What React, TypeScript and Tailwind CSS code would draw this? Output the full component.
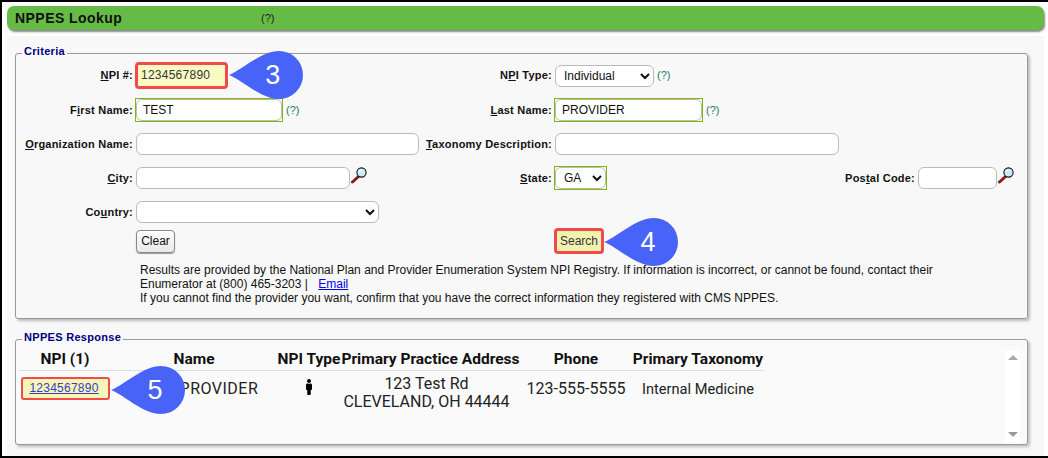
import { FaMale } from 'react-icons/fa';

const inputCls = 'h-[22px] rounded-[6px] border border-[#bbb] bg-white px-[6px] text-[12px] text-[#111] outline-none';
const labelCls = 'pr-[3px] text-right text-[11px] font-bold tracking-[0.22px] text-[#111] whitespace-nowrap';
const legendCls = 'ml-[6px] -translate-y-[2px] px-[2px] text-[11px] leading-[14px] font-bold tracking-[0.3px] text-[#00007f]';
const fieldsetCls = 'rounded-[3px] border border-[#999] shadow-[2px_2px_3px_#bbb]';
const helpCls = 'text-[11px] text-[#2a7a6a] ml-[3px]';

function Magnifier() {
  return (
    <svg width="16" height="17" viewBox="0 0 16 17" className="ml-px -mt-[5px] shrink-0">
      <path d="M1.5 15L7 10" stroke="#8e1a10" strokeWidth="3" strokeLinecap="round" />
      <circle cx="10.5" cy="5.5" r="4.6" fill="#cdeaf8" stroke="#111" strokeWidth="1.1" />
      <path d="M8 5c.6-1.3 1.8-2 3.2-1.8" stroke="#fff" strokeWidth="1.2" fill="none" />
    </svg>
  );
}

function Callout({ n, className }: { n: string; className: string }) {
  return (
    <div className={`absolute h-[50px] w-[76px] ${className}`}>
      <svg width="76" height="50" viewBox="0 0 76 50" className="absolute inset-0">
        <path d="M1 25C14 20 33 1 51 1A24 24 0 1 1 51 49C33 49 14 30 1 25Z" fill="#4763f8" />
      </svg>
      <span className="absolute left-[25px] top-0 w-[40px] text-center text-[27px] leading-[50px] text-white">{n}</span>
    </div>
  );
}

function GreenBox({ children, className = '' }: { children: React.ReactNode; className?: string }) {
  return <div className={`inline-flex border border-[#7fb800] ${className}`}>{children}</div>;
}

export default function App() {
  return (
    <div className="flex h-[458px] flex-col border-y-2 border-l-2 border-black bg-white pt-[4px] pl-[5px] pr-[4px] font-['Liberation_Sans',Arial,sans-serif]">
      <div className="flex h-[24px] shrink-0 items-center rounded-[7px] bg-[#66bb46] pl-[8px] shadow-[1px_2px_2px_#888]">
        <h1 className="w-[246px] text-[14px] font-bold tracking-[0.45px] text-[#111]">NPPES Lookup</h1>
        <span className="text-[11px] text-[#222]">(?)</span>
      </div>

      <div className="mt-[6px] flex flex-1 flex-col bg-[#f8f8f8] pt-[10px] pl-[8px] pr-[16px]">
        <fieldset className={fieldsetCls + ' pb-[13px]'}>
          <legend className={legendCls}>Criteria</legend>
          <div className="-mt-[2px] grid grid-cols-[120px_287px_132px_290px_73px_1fr] grid-rows-[35px_34px_34px_34px_34px_24px] items-center">
            <label className={labelCls}><u>N</u>PI #:</label>
            <div className="relative h-[27px] w-[93px] -ml-px rounded-[4px] border-[3px] border-[#f24a4a] bg-[#fafac4] pl-[3px] text-[12px] leading-[21px] tracking-[0.25px] text-[#333]">
              1234567890
              <Callout n="3" className="left-[calc(100%+3px)] -top-[15px]" />
            </div>
            <label className={labelCls}>N<u>P</u>I Type:</label>
            <div className="col-span-3 flex items-center">
              <select defaultValue="Individual" className={inputCls + ' w-[99px] pl-[4px]'}>
                <option>Individual</option>
              </select>
              <span className={helpCls}>(?)</span>
            </div>

            <label className={labelCls}>F<u>i</u>rst Name:</label>
            <div className="-ml-px flex items-center">
              <GreenBox>
                <input readOnly value="TEST" className={inputCls + ' w-[146px]'} />
              </GreenBox>
              <span className={helpCls}>(?)</span>
            </div>
            <label className={labelCls}><u>L</u>ast Name:</label>
            <div className="col-span-3 -ml-px flex items-center">
              <GreenBox>
                <input readOnly value="PROVIDER" className={inputCls + ' w-[147px]'} />
              </GreenBox>
              <span className={helpCls}>(?)</span>
            </div>

            <label className={labelCls}><u>O</u>rganization Name:</label>
            <input readOnly className={inputCls + ' w-[283px]'} />
            <label className={labelCls}><u>T</u>axonomy Description:</label>
            <input readOnly className={inputCls + ' col-span-3 w-[284px]'} />

            <label className={labelCls}><u>C</u>ity:</label>
            <div className="flex items-center">
              <input readOnly className={inputCls + ' w-[214px]'} />
              <Magnifier />
            </div>
            <label className={labelCls}><u>S</u>tate:</label>
            <GreenBox className="-ml-px justify-self-start">
              <select defaultValue="GA" className={inputCls + ' w-[51px] pl-[4px]'}>
                <option>GA</option>
              </select>
            </GreenBox>
            <label className={labelCls}>Pos<u>t</u>al Code:</label>
            <div className="flex items-center">
              <input readOnly className={inputCls + ' w-[79px]'} />
              <Magnifier />
            </div>

            <label className={labelCls}>Co<u>u</u>ntry:</label>
            <select className={inputCls + ' col-span-5 w-[243px]'}>
              <option></option>
            </select>

            <div />
            <button className="h-[23px] w-[39px] rounded-[4px] border border-[#888] bg-[linear-gradient(#fff,#e8e8e8)] text-[12px] text-[#111] shadow-[0_1px_1px_#999]">
              Clear
            </button>
            <div />
            <button className="relative col-span-3 h-[26px] w-[50px] -ml-px rounded-[4px] border-[3px] border-[#f24a4a] bg-[#f2f2b0] text-[12px] text-[#333]">
              Search
              <Callout n="4" className="left-[calc(100%+2px)] -top-[14px]" />
            </button>
          </div>
          <p className="mt-[10px] ml-[124px] text-[12px] leading-[14px] whitespace-nowrap text-[#111]">
            Results are provided by the National Plan and Provider Enumeration System NPI Registry. If information is incorrect, or cannot be found, contact their
            <br />
            Enumerator at (800) 465-3203 | <a href="#" className="ml-[7px] text-[#0000ee] underline">Email</a>
            <br />
            If you cannot find the provider you want, confirm that you have the correct information they registered with CMS NPPES.
          </p>
        </fieldset>

        <fieldset className={fieldsetCls + ' mt-[13px] h-[113px] min-h-0'}>
          <legend className={legendCls}>NPPES Response</legend>
          <div className="flex h-[96px] items-start bg-[#fafafa]">
            <div className="flex-1 pl-[3px] font-['Roboto',sans-serif]">
              <table className="w-[745px] table-fixed border-collapse text-center">
                <thead>
                  <tr className="h-[24px] border-b border-[#ddd] text-[15.5px] leading-[18px] text-[#111]">
                    <th className="w-[92px] pt-[3px] font-bold">NPI (1)</th>
                    <th className="w-[166px] pt-[3px] font-bold">Name</th>
                    <th className="w-[64px] pt-[3px] font-bold whitespace-nowrap">NPI Type</th>
                    <th className="w-[179px] pt-[3px] font-bold whitespace-nowrap">Primary Practice Address</th>
                    <th className="w-[112px] pt-[3px] font-bold">Phone</th>
                    <th className="w-[132px] pt-[3px] font-bold whitespace-nowrap">Primary Taxonomy</th>
                  </tr>
                </thead>
                <tbody className="text-[16px] leading-[18px] text-[#222]">
                  <tr>
                    <td className="pt-[6px] align-top">
                      <div className="relative ml-[2px] h-[23px] w-[89px] rounded-[3px] border-[2px] border-[#f24a4a] bg-[#f5f5b8] pr-[3px] font-['Liberation_Sans',sans-serif] text-[12px] leading-[19px]">
                        <a href="#" className="tracking-[0.25px] text-[#3a3acc] underline">1234567890</a>
                        <Callout n="5" className="left-[calc(100%+2px)] -top-[14px]" />
                      </div>
                    </td>
                    <td className="pt-[9px] pl-[6px] align-top tracking-[0.5px] whitespace-nowrap">TEST PROVIDER</td>
                    <td className="pt-[8px] align-top">
                      <FaMale className="mx-auto text-[16px] text-black" />
                    </td>
                    <td className="pt-[4px] pr-[8px] align-top whitespace-nowrap">123 Test Rd<br />CLEVELAND, OH 44444</td>
                    <td className="pt-[9px] align-top whitespace-nowrap">123-555-5555</td>
                    <td className="pt-[9px] align-top text-[14.6px] whitespace-nowrap">Internal Medicine</td>
                  </tr>
                </tbody>
              </table>
            </div>
            <div className="mt-[4px] mr-[7px] flex h-[94px] w-[15px] flex-col items-center justify-between bg-white pt-[5px] pb-[7px]">
              <span className="h-0 w-0 border-x-[5px] border-b-[5px] border-x-transparent border-b-[#aaa]" />
              <span className="h-0 w-0 border-x-[5px] border-t-[5px] border-x-transparent border-t-[#999]" />
            </div>
          </div>
        </fieldset>
      </div>
    </div>
  );
}
